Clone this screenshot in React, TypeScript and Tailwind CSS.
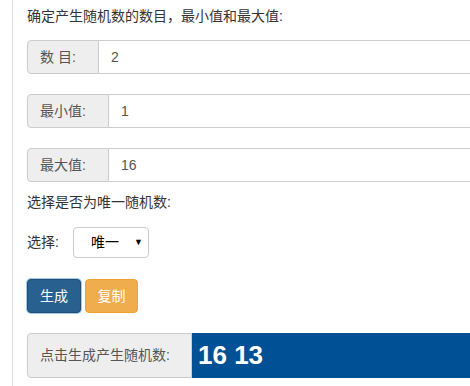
import React from "react";

const font = { fontFamily: '"Liberation Sans", "Noto Sans CJK SC", sans-serif' };

function Group({ label, value, labelW }: { label: string; value: string; labelW: string }) {
  return (
    <div className="flex h-[34px] w-[600px] text-[14px] text-[#555]">
      <div className={`${labelW} flex items-center rounded-l-[4px] border border-[#ccc] bg-[#eee] px-[12px]`}>{label}</div>
      <div className="flex flex-1 items-center border border-l-0 border-[#ccc] bg-white px-[12px]">{value}</div>
    </div>
  );
}

export default function App() {
  return (
    <div className="h-[386px] w-[470px] overflow-hidden bg-white" style={font}>
      <div className="ml-[12px] h-full border-l border-[#ddd] pl-[14px] text-[14px] text-[#333]">
        <div className="pt-[6px] leading-[20px]">确定产生随机数的数目，最小值和最大值:</div>
        <div className="mt-[14px]">
          <Group label="数 目:" value="2" labelW="w-[72px]" />
        </div>
        <div className="mt-[20px]">
          <Group label="最小值:" value="1" labelW="w-[82px]" />
        </div>
        <div className="mt-[20px]">
          <Group label="最大值:" value="16" labelW="w-[82px]" />
        </div>
        <div className="mt-[10px] leading-[20px]">选择是否为唯一随机数:</div>
        <div className="mt-[15px] flex items-center">
          <span className="w-[46px]">选择:</span>
          <div className="flex h-[31px] w-[76px] items-center justify-between rounded-[4px] border border-[#ccc] bg-white pl-[17px] pr-[5px] text-[14px] text-black">
            <span>唯一</span>
            <span className="text-[9px]">▼</span>
          </div>
        </div>
        <div className="mt-[21px] flex gap-[4px]">
          <button className="flex h-[34px] w-[54px] items-center justify-center rounded-[4px] border border-[#204d74] bg-[#286090] text-white shadow-[0_0_0_1px_#9ecaed]">生成</button>
          <button className="flex h-[34px] w-[53px] items-center justify-center rounded-[4px] border border-[#eea236] bg-[#f0ad4e] text-white">复制</button>
        </div>
        <div className="mt-[20px] flex h-[45px] w-[600px]">
          <div className="flex w-[165px] items-center rounded-l-[4px] border border-[#ccc] bg-[#eee] px-[12px] text-[#555]">点击生成产生随机数:</div>
          <div className="flex flex-1 items-center bg-[#005096] pl-[6px] text-[26px] font-bold text-white" style={{ fontFamily: '"Liberation Sans", Arial, sans-serif' }}>16 13</div>
        </div>
      </div>
    </div>
  );
}
